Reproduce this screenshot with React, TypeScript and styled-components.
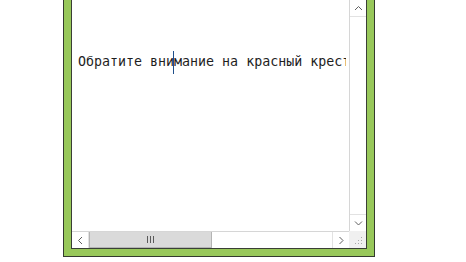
import styled, { createGlobalStyle } from "styled-components";

const GlobalStyle = createGlobalStyle`
    html, body {
        margin: 0;
        padding: 0;
        background: #ffffff;
    }
    body {
        width: 466px;
        height: 262px;
        overflow: hidden;
        font-family: "DejaVu Sans", sans-serif;
    }
`;

const Stage = styled.div`
    display: flex;
    padding-left: 63px;
    margin-top: -9px;
`;

const Frame = styled.div`
    width: 296px;
    border: 1px solid #333a2e;
    background-color: #98c85a;
    padding: 7px;
`;

const Editor = styled.div`
    height: 248px;
    border: 1px solid #3a3f36;
    background-color: #ffffff;
    display: grid;
    grid-template-columns: 1fr 17px;
    grid-template-rows: 1fr 17px;
`;

const TextArea = styled.div`
    overflow: hidden;
    margin-right: 3px;
    padding: 54px 0 0 6px;
    font-family: "DejaVu Sans Mono", "Liberation Mono", monospace;
    font-size: 13.3px;
    line-height: 16px;
    color: #1e1e1e;
    white-space: pre;
`;

const CaretAnchor = styled.span`
    position: relative;
`;

const Caret = styled.span`
    position: absolute;
    left: -1px;
    top: -3px;
    width: 1px;
    height: 23px;
    background-color: #1f4f8a;
`;

const VScroll = styled.div`
    display: flex;
    flex-direction: column;
    border-left: 1px solid #d6d6d6;
    background-color: #ffffff;
`;

const HScroll = styled.div`
    display: flex;
    border-top: 1px solid #d6d6d6;
    background-color: #ffffff;
`;

const ArrowButton = styled.div<{ $side: "top" | "bottom" | "left" | "right" }>`
    flex: 0 0 16px;
    display: flex;
    align-items: center;
    justify-content: center;
    background-color: #ffffff;
    border-${p => (p.$side === "top" ? "bottom" : p.$side === "bottom" ? "top" : p.$side === "left" ? "right" : "left")}: 1px solid #e2e2e2;
`;

const Track = styled.div`
    flex: 1;
`;

const Thumb = styled.div`
    flex: 0 0 123px;
    box-sizing: border-box;
    background-color: #dadada;
    border: 1px solid #b4b4b4;
    border-top: none;
    display: flex;
    align-items: center;
    justify-content: center;
`;

const Corner = styled.div`
    background-color: #f0f0f0;
    display: flex;
    align-items: flex-end;
    justify-content: flex-end;
    padding: 0 3px 3px 0;
`;

function Chevron({ dir }: { dir: "up" | "down" | "left" | "right" }) {
    const paths = {
        up: "M1 5 L4.5 1.5 L8 5",
        down: "M1 1.5 L4.5 5 L8 1.5",
        left: "M5 1 L1.5 4.5 L5 8",
        right: "M1.5 1 L5 4.5 L1.5 8",
    };
    const w = dir === "up" || dir === "down" ? 9 : 7;
    const h = dir === "up" || dir === "down" ? 7 : 9;
    return (
        <svg width={w} height={h} viewBox={`0 0 ${w} ${h}`}>
            <path d={paths[dir]} fill="none" stroke="#606060" strokeWidth="1" />
        </svg>
    );
}

function Grip() {
    return (
        <svg width="8" height="7" viewBox="0 0 8 7">
            <rect x="0" y="0" width="1" height="7" fill="#5a5a5a" />
            <rect x="3" y="0" width="1" height="7" fill="#5a5a5a" />
            <rect x="6" y="0" width="1" height="7" fill="#5a5a5a" />
        </svg>
    );
}

function SizeGrip() {
    const dots = [
        [8, 0], [8, 3], [5, 3], [8, 6], [5, 6], [2, 6],
    ];
    return (
        <svg width="10" height="8" viewBox="0 0 10 8">
            {dots.map(([x, y]) => <rect key={`${x}-${y}`} x={x} y={y} width="1" height="1" fill="#a8a8a8" />)}
        </svg>
    );
}

export default function App() {
    return <>
        <GlobalStyle />
        <Stage>
            <Frame>
                <Editor>
                    <TextArea>
                        Обратите вни<CaretAnchor><Caret /></CaretAnchor>мание на красный крест
                    </TextArea>

                    <VScroll>
                        <ArrowButton $side="top"><Chevron dir="up" /></ArrowButton>
                        <Track />
                        <ArrowButton $side="bottom"><Chevron dir="down" /></ArrowButton>
                    </VScroll>

                    <HScroll>
                        <ArrowButton $side="left"><Chevron dir="left" /></ArrowButton>
                        <Thumb><Grip /></Thumb>
                        <Track />
                        <ArrowButton $side="right"><Chevron dir="right" /></ArrowButton>
                    </HScroll>

                    <Corner><SizeGrip /></Corner>
                </Editor>
            </Frame>
        </Stage>
    </>;
}
